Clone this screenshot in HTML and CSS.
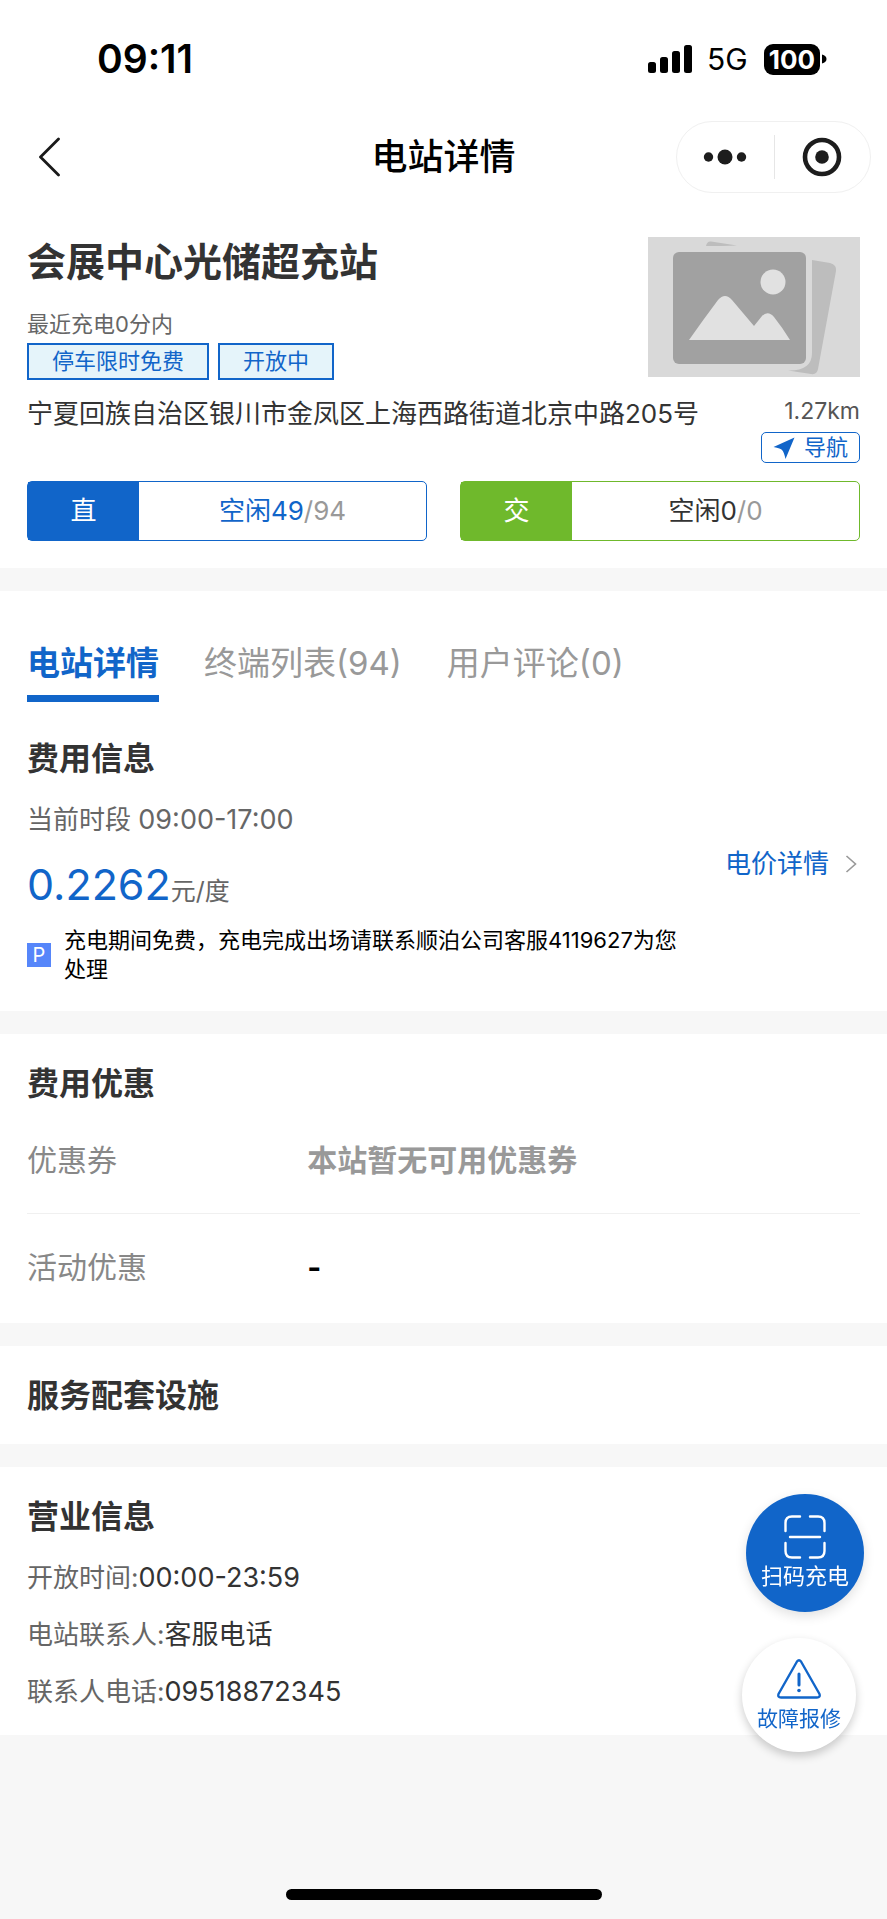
FILE: index.html
```html
<!DOCTYPE html>
<html lang="zh-CN">
<head>
<meta charset="utf-8">
<meta name="viewport" content="width=device-width, initial-scale=1">
<title>电站详情</title>
<link rel="stylesheet" href="styles.css">
</head>
<body>
<header class="top">
  <div class="status">
    <span class="status-time">09:11</span>
    <div class="status-icons">
      <svg width="44" height="29" viewBox="0 0 44 29" aria-hidden="true">
        <rect x="0" y="17" width="8" height="11" rx="2.5"/>
        <rect x="12" y="12" width="8" height="16" rx="2.5"/>
        <rect x="24" y="6" width="8" height="22" rx="2.5"/>
        <rect x="36" y="0" width="8" height="28" rx="2.5"/>
      </svg>
      <span class="status-net">5G</span>
      <span class="battery"><span class="battery-level">100</span><svg width="5" height="10" viewBox="0 0 5 10" aria-hidden="true"><path d="M0 0.500C6 2 6 8 0 9.500Z"/></svg></span>
    </div>
  </div>
  <nav class="nav">
    <button class="icon-button back" type="button" aria-label="返回">
      <svg width="22" height="40" viewBox="0 0 22 40" fill="none" stroke="#1a1a1a" stroke-width="2.800" stroke-linecap="round" stroke-linejoin="round"><path d="M20.500 2L2.500 20L20.500 38"/></svg>
    </button>
    <h1 class="nav-title">电站详情</h1>
    <div class="capsule">
      <button class="icon-button" type="button" aria-label="更多">
        <svg width="44" height="16" viewBox="0 0 44 16" fill="#1d1d1d"><circle cx="5.500" cy="8" r="4.700"/><circle cx="22" cy="8" r="7.500"/><circle cx="38.500" cy="8" r="4.700"/></svg>
      </button>
      <button class="icon-button" type="button" aria-label="关闭">
        <svg width="40" height="40" viewBox="0 0 40 40"><circle cx="20" cy="20" r="17" fill="none" stroke="#1d1d1d" stroke-width="4.600"/><circle cx="20" cy="20" r="6.800" fill="#1d1d1d"/></svg>
      </button>
    </div>
  </nav>
</header>

<main class="sections">
  <section class="section station">
    <div class="station-head">
      <div>
        <h2 class="station-name">会展中心光储超充站</h2>
        <p class="station-recent">最近充电0分内</p>
        <div class="tags"><span class="tag">停车限时免费</span><span class="tag">开放中</span></div>
      </div>
      <svg class="photo" width="212" height="140" viewBox="0 0 212 140" role="img" aria-label="电站图片">
        <rect width="212" height="140" fill="#d9d9d9"/>
        <path d="M58 9Q59 4 63 4.500L89 8.500Q74 9 58 9Z" fill="#bdbdbd"/>
        <path d="M164 23L182 26Q189 28 188 34L170 132Q169 138 163 137L140 133.500Q164 134 164 116Z" fill="#bdbdbd"/>
        <rect x="25" y="15" width="133" height="112" rx="6" fill="#a1a1a1"/>
        <circle cx="125" cy="45" r="12.500" fill="#e1e1e1"/>
        <path d="M41 103Q55 83 70 63Q77 55 84 63L106 89Q110 84 114 79Q120 73 126 80Q134 90 142 103Z" fill="#e1e1e1"/>
      </svg>
    </div>
    <div class="location">
      <p class="address">宁夏回族自治区银川市金凤区上海西路街道北京中路205号</p>
      <div class="route">
        <span class="distance">1.27km</span>
        <button class="navigate" type="button">
          <svg width="22" height="22" viewBox="0 0 22 22" fill="#1165c9" aria-hidden="true"><path d="M21.500 0.500L0.500 10Q8 11.500 9 13Q11 15 12.500 22Z"/></svg>
          导航
        </button>
      </div>
    </div>
    <div class="piles">
      <div class="pile pile-dc"><span class="pile-type">直</span><span class="pile-count"><span class="pile-free">空闲49</span>/94</span></div>
      <div class="pile pile-ac"><span class="pile-type">交</span><span class="pile-count"><span class="pile-free">空闲0</span>/0</span></div>
    </div>
  </section>

  <section class="section fees">
    <div class="tabs" role="tablist">
      <button class="tab tab-active" type="button" role="tab" aria-selected="true">电站详情</button>
      <button class="tab" type="button" role="tab" aria-selected="false">终端列表(94)</button>
      <button class="tab" type="button" role="tab" aria-selected="false">用户评论(0)</button>
    </div>
    <h2 class="heading">费用信息</h2>
    <div class="price-row">
      <div>
        <p class="period">当前时段 <span class="period-time">09:00-17:00</span></p>
        <p class="price"><span class="price-value">0.2262</span>元/度</p>
      </div>
      <a class="price-link" href="#price">电价详情
        <svg width="12" height="18" viewBox="0 0 12 18" fill="none" stroke="#999" stroke-width="1.600" aria-hidden="true"><path d="M1.500 1L10.500 9L1.500 17"/></svg>
      </a>
    </div>
    <div class="parking">
      <span class="parking-badge">P</span>
      <p class="parking-text">充电期间免费，充电完成出场请联系顺泊公司客服4119627为您处理</p>
    </div>
  </section>

  <section class="section">
    <h2 class="heading">费用优惠</h2>
    <dl class="offers">
      <div class="offer"><dt>优惠券</dt><dd class="offer-empty">本站暂无可用优惠券</dd></div>
      <div class="offer"><dt>活动优惠</dt><dd>-</dd></div>
    </dl>
  </section>

  <section class="section services">
    <h2 class="heading">服务配套设施</h2>
  </section>

  <section class="section business">
    <h2 class="heading">营业信息</h2>
    <dl class="facts">
      <div class="fact"><dt>开放时间:</dt><dd>00:00-23:59</dd></div>
      <div class="fact"><dt>电站联系人:</dt><dd>客服电话</dd></div>
      <div class="fact"><dt>联系人电话:</dt><dd>09518872345</dd></div>
    </dl>
  </section>
</main>

<div class="floating">
  <button class="fab fab-scan" type="button">
    <svg width="42" height="44" viewBox="0 0 42 44" fill="none" stroke="#fff" stroke-width="2.400" stroke-linecap="round" aria-hidden="true"><path d="M1.500 16V8Q1.500 1.500 8 1.500H16M26 1.500H34Q40.500 1.500 40.500 8V16M40.500 28V36Q40.500 42.500 34 42.500H26M16 42.500H8Q1.500 42.500 1.500 36V28M6 22H36"/></svg>
    扫码充电
  </button>
  <button class="fab fab-repair" type="button">
    <svg width="44" height="40" viewBox="0 0 44 40" fill="none" stroke="#1165c9" stroke-width="2.400" stroke-linecap="round" stroke-linejoin="round" aria-hidden="true"><path d="M20 2.500Q22 0 24 2.500L42.500 35Q43.500 38.500 40 38.500H4Q0.500 38.500 1.500 35Z"/><path d="M22 15V26" stroke-width="3"/><circle cx="22" cy="31.500" r="1.800" fill="#1165c9" stroke="none"/></svg>
    故障报修
  </button>
</div>
<div class="home-indicator"></div>
</body>
</html>
```
FILE: styles.css
```css
:root {
  --blue: #1165c9;
  --green: #6fb92c;
  --ink: #333;
  --muted: #666;
  --light: #999;
  --edge: 27px;
}

* { box-sizing: border-box; }

body, h1, h2, p, dl, dd { margin: 0; }

body {
  min-height: 100vh;
  background: #f7f7f7;
  color: var(--ink);
  font-family: Inter, "Noto Sans CJK SC", sans-serif;
  font-size: 26px;
  line-height: 36px;
}

button {
  padding: 0;
  border: 0;
  background: none;
  color: inherit;
  font: inherit;
  cursor: pointer;
}

svg { display: block; flex: none; }

.top { background: #fff; }

.status {
  display: flex;
  justify-content: space-between;
  align-items: center;
  height: 118px;
  padding: 0 60px 0 97px;
  color: #000;
}

.status-time { font-size: 39px; font-weight: 600; }

.status-icons { display: flex; align-items: center; }

.status-net { margin: 0 16px 0 15px; font-size: 30px; }

.battery { display: flex; align-items: center; gap: 2px; }

.battery-level {
  padding: 0 5px;
  border-radius: 9px;
  background: #000;
  color: #fff;
  font-size: 26px;
  font-weight: 700;
  line-height: 31px;
}

.nav {
  display: grid;
  grid-template-columns: 1fr auto 1fr;
  align-items: center;
  height: 78px;
  padding: 0 16px;
}

.icon-button { display: grid; place-items: center; }

.back { justify-self: start; padding-left: 22px; }

.nav-title { color: #000; font-size: 36px; font-weight: 500; line-height: 48px; }

.capsule {
  display: grid;
  grid-template-columns: 1fr 1fr;
  justify-self: end;
  width: 195px;
  height: 72px;
  border: 1px solid #f0f0f0;
  border-radius: 36px;
}

.capsule .icon-button { margin: 13px 0; }

.capsule .icon-button + .icon-button { border-left: 1px solid #e6e6e6; }

.sections { display: grid; gap: 23px; }

.section { padding: 27px var(--edge) 0; background: #fff; }

.heading { font-size: 32px; font-weight: 700; line-height: 46px; }

.station { padding-top: 41px; padding-bottom: 27px; }

.station-head { display: flex; justify-content: space-between; align-items: flex-start; }

.station-name { font-size: 39px; font-weight: 700; line-height: 50px; }

.station-recent {
  margin: 21px 0 3px;
  color: var(--muted);
  font-size: 22px;
  line-height: 32px;
}

.tags { display: flex; gap: 9px; }

.tag {
  padding: 0 23px;
  border: 2px solid var(--blue);
  background: #e5f4fa;
  color: var(--blue);
  font-size: 22px;
  line-height: 33px;
}

.location { display: flex; justify-content: space-between; margin-top: 16px; }

.route { display: grid; justify-items: end; gap: 6px; }

.distance { color: #555; font-size: 23px; line-height: 30px; }

.navigate {
  display: flex;
  align-items: center;
  gap: 9px;
  padding: 0 11px;
  border: 1px solid var(--blue);
  border-radius: 5px;
  color: var(--blue);
  font-size: 22px;
  line-height: 29px;
}

.piles {
  display: grid;
  grid-template-columns: 1fr 1fr;
  gap: 33px;
  margin-top: 18px;
}

.pile {
  display: grid;
  grid-template-columns: 111px 1fr;
  border: 1px solid var(--pile);
  border-radius: 5px;
  text-align: center;
  line-height: 58px;
}

.pile-dc { --pile: var(--blue); --free: var(--blue); }

.pile-ac { --pile: var(--green); --free: var(--ink); }

.pile-type { background: var(--pile); color: #fff; }

.pile-count { color: var(--light); }

.pile-free { color: var(--free); }

.fees { padding-top: 49px; padding-bottom: 27px; }

.tabs { display: flex; gap: 45px; margin-bottom: 34px; }

.tab {
  padding-bottom: 9px;
  border-bottom: 7px solid transparent;
  color: var(--light);
  font-size: 33px;
  line-height: 46px;
}

.tab-active { border-color: var(--blue); color: var(--blue); font-weight: 700; }

.price-row {
  display: flex;
  justify-content: space-between;
  align-items: center;
  margin-top: 20px;
}

.period { color: var(--muted); }

.period-time { font-size: 27px; }

.price { margin: 18px 0 7px; color: var(--muted); font-size: 25px; line-height: 56px; }

.price-value { color: var(--blue); font-size: 43px; }

.price-link {
  display: flex;
  align-items: center;
  gap: 16px;
  padding-right: 3px;
  color: var(--blue);
  text-decoration: none;
}

.parking { display: flex; align-items: center; gap: 13px; color: #000; }

.parking-badge {
  flex: none;
  width: 24px;
  background: #5686fa;
  color: #fff;
  font-size: 20px;
  line-height: 24px;
  text-align: center;
}

.parking-text { padding-right: 165px; font-size: 22px; line-height: 29px; }

.offers { padding-bottom: 3px; font-size: 30px; line-height: 44px; }

.offer {
  display: grid;
  grid-template-columns: 1fr 2fr;
  column-gap: 4px;
  padding: 31px 0;
}

.offer + .offer { border-top: 1px solid #f0f0f0; }

.offer dt { color: #888; }

.offer dd { color: #000; font-weight: 700; }

.offer .offer-empty { color: var(--light); }

.services { padding-bottom: 25px; }

.business { padding-bottom: 15px; }

.facts { margin-top: 9px; line-height: 57px; }

.fact { display: flex; }

.fact dt { color: var(--muted); }

.fact dd { font-size: 27px; }

.floating {
  position: fixed;
  right: 23px;
  bottom: 167px;
  display: grid;
  justify-items: end;
  gap: 26px;
}

.fab {
  display: flex;
  flex-direction: column;
  align-items: center;
  border-radius: 50%;
  line-height: 30px;
}

.fab-scan {
  gap: 2px;
  width: 118px;
  height: 118px;
  padding-top: 21px;
  background: var(--blue);
  color: #fff;
  font-size: 22px;
  box-shadow: 0 4px 12px rgb(0 0 0 / 12%);
}

.fab-repair {
  gap: 5px;
  width: 114px;
  height: 114px;
  margin-right: 8px;
  padding-top: 21px;
  background: #fff;
  color: var(--blue);
  font-size: 21px;
  box-shadow: 0 4px 10px rgb(0 0 0 / 20%);
}

.home-indicator {
  position: fixed;
  bottom: 19px;
  left: 50%;
  width: 316px;
  height: 11px;
  margin-left: -158px;
  border-radius: 6px;
  background: #000;
}
```
